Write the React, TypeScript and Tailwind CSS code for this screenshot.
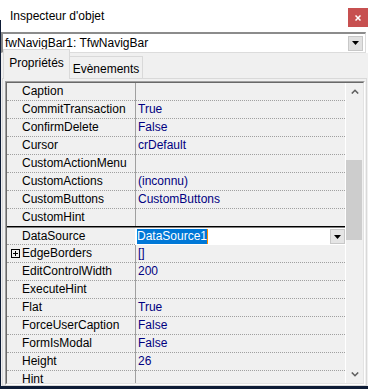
import React from "react";

type Row = { name: string; value: string; kind?: "sel" | "plus" | "beforeSel" };

const rows: Row[] = [
  { name: "Caption", value: "" },
  { name: "CommitTransaction", value: "True" },
  { name: "ConfirmDelete", value: "False" },
  { name: "Cursor", value: "crDefault" },
  { name: "CustomActionMenu", value: "" },
  { name: "CustomActions", value: "(inconnu)" },
  { name: "CustomButtons", value: "CustomButtons" },
  { name: "CustomHint", value: "", kind: "beforeSel" },
  { name: "DataSource", value: "DataSource1", kind: "sel" },
  { name: "EdgeBorders", value: "[]", kind: "plus" },
  { name: "EditControlWidth", value: "200" },
  { name: "ExecuteHint", value: "" },
  { name: "Flat", value: "True" },
  { name: "ForceUserCaption", value: "False" },
  { name: "FormIsModal", value: "False" },
  { name: "Height", value: "26" },
  { name: "Hint", value: "" },
];

function DownTri() {
  return (
    <svg width="7" height="4" viewBox="0 0 7 4">
      <polygon points="0,0 7,0 3.5,4" fill="#000" />
    </svg>
  );
}

function Chevron({ up }: { up?: boolean }) {
  return (
    <svg width="8" height="5" viewBox="0 0 8 5">
      <polyline
        points={up ? "0.8,4.5 4,1.3 7.2,4.5" : "0.8,0.5 4,3.7 7.2,0.5"}
        fill="none"
        stroke="#606060"
        strokeWidth="1.6"
      />
    </svg>
  );
}

function GridRow({ row }: { row: Row }) {
  if (row.kind === "sel") {
    return (
      <div className="flex h-[18px] border-t border-[#808080] shrink-0">
        <div className="w-[128px] h-[17px] pl-[15px] leading-[16px] border-b border-dotted border-[#a0a0a0] text-black">
          {row.name}
        </div>
        <div className="w-[1px] h-full bg-white" />
        <div className="flex-1 h-[17px] bg-white flex items-start pl-[1px] pt-[1px]">
          <span className="bg-[#0078d7] text-white h-[15px] leading-[15px]">{row.value}</span>
          <span className="w-[1px] h-[15px] bg-[#ff8c00]" />
          <div className="ml-auto w-[15px] h-[15px] bg-[#e5e5e5] border border-[#c8c8c8] flex items-center justify-center">
            <DownTri />
          </div>
        </div>
      </div>
    );
  }
  const last = row.kind === "beforeSel";
  return (
    <div className={"flex h-[18px] shrink-0 " + (last ? "border-b border-black" : "")}>
      <div
        className={
          "w-[128px] h-[17px] leading-[17px] text-black flex items-center " +
          (row.kind === "plus" ? "pl-[4px] " : "pl-[15px] ") +
          (last ? "" : "border-b border-dotted border-[#a0a0a0] h-[18px]")
        }
      >
        {row.kind === "plus" && (
          <div className="w-[9px] h-[9px] border border-black mr-[2px] flex items-center justify-center shrink-0">
            <svg width="7" height="7" viewBox="0 0 7 7">
              <rect x="1" y="3" width="5" height="1" fill="#000" />
              <rect x="3" y="1" width="1" height="5" fill="#000" />
            </svg>
          </div>
        )}
        <span>{row.name}</span>
      </div>
      <div className={"w-[1px] bg-[#a0a0a0] " + (last ? "h-[17px]" : "h-[18px]")} />
      <div
        className={
          "flex-1 pl-[2px] leading-[17px] text-[#000080] " +
          (last ? "h-[17px]" : "h-[18px] border-b border-dotted border-[#a0a0a0]")
        }
      >
        {row.value}
      </div>
    </div>
  );
}

export default function App() {
  return (
    <div
      className="w-[368px] h-[389px] bg-[#0e1c36] flex overflow-hidden text-[12px]"
      style={{ fontFamily: '"Liberation Sans", Arial, sans-serif' }}
    >
      <div className="w-[1px] shrink-0">
        <div className="h-[20px] bg-white" />
      </div>
      <div className="w-[367px] h-[386px] bg-[#f0f0f0] flex flex-col">
        {/* Title bar */}
        <div className="h-[32px] bg-white flex items-start shrink-0">
          <div className="pl-[9px] h-[32px] leading-[32px] text-black">Inspecteur d'objet</div>
          <div className="ml-auto mt-[8px] w-[20px] h-[19px] bg-[#c75050] flex items-center justify-center">
            <svg width="6" height="6" viewBox="0 0 6 6">
              <path d="M0.5 0.5 L5.5 5.5 M5.5 0.5 L0.5 5.5" stroke="#fff" strokeWidth="1.5" />
            </svg>
          </div>
        </div>
        {/* Combo */}
        <div className="h-[21px] bg-white shrink-0">
          <div className="w-[365px] h-[21px] border-t-2 border-l-2 border-[#8c8c8c] border-r border-b border-r-[#dcdcdc] border-b-[#dcdcdc] bg-white flex items-center">
            <span className="pl-[2px] text-black leading-[17px]">fwNavigBar1: TfwNavigBar</span>
            <div className="ml-auto mr-[2px] w-[15px] h-[15px] bg-[#e1e1e1] border border-[#c8c8c8] flex items-center justify-center">
              <DownTri />
            </div>
          </div>
        </div>
        {/* Tabs */}
        <div className="h-[25px] flex items-end pl-[2px] shrink-0">
          <div className="h-[25px] w-[65px] bg-[#f0f0f0] border-t border-l border-r border-[#d9d9d9] border-b-0 flex items-start justify-center pt-[4px] relative z-10 -mb-[1px] box-content">
            <span className="text-black">Propriétés</span>
          </div>
          <div className="h-[22px] w-[73px] bg-[#f0f0f0] border-t border-r border-[#d9d9d9] flex items-start justify-center pt-[3px]">
            <span className="text-black">Evènements</span>
          </div>
        </div>
        {/* Tab page */}
        <div className="ml-[1px] w-[365px] h-[308px] border border-[#d9d9d9] pt-[2px] pl-[2px] pr-[1px] shrink-0">
          <div className="h-[304px] border-t border-l border-[#a0a0a0] border-r border-b border-r-white border-b-white">
            <div className="h-[302px] border-t border-l border-[#696969] border-r border-b border-r-[#e3e3e3] border-b-[#e3e3e3] flex overflow-hidden">
              <div className="flex-1 flex flex-col overflow-hidden">
                {rows.map((r) => (
                  <GridRow key={r.name} row={r} />
                ))}
              </div>
              <div className="w-[18px] border-l border-white flex flex-col shrink-0">
                <div className="h-[17px] flex items-center justify-center">
                  <Chevron up />
                </div>
                <div className="flex-1 flex flex-col">
                  <div className="mt-[60px] h-[80px] w-[16px] bg-[#cdcdcd]" />
                </div>
                <div className="h-[17px] flex items-center justify-center">
                  <Chevron />
                </div>
              </div>
            </div>
          </div>
        </div>
      </div>
    </div>
  );
}
